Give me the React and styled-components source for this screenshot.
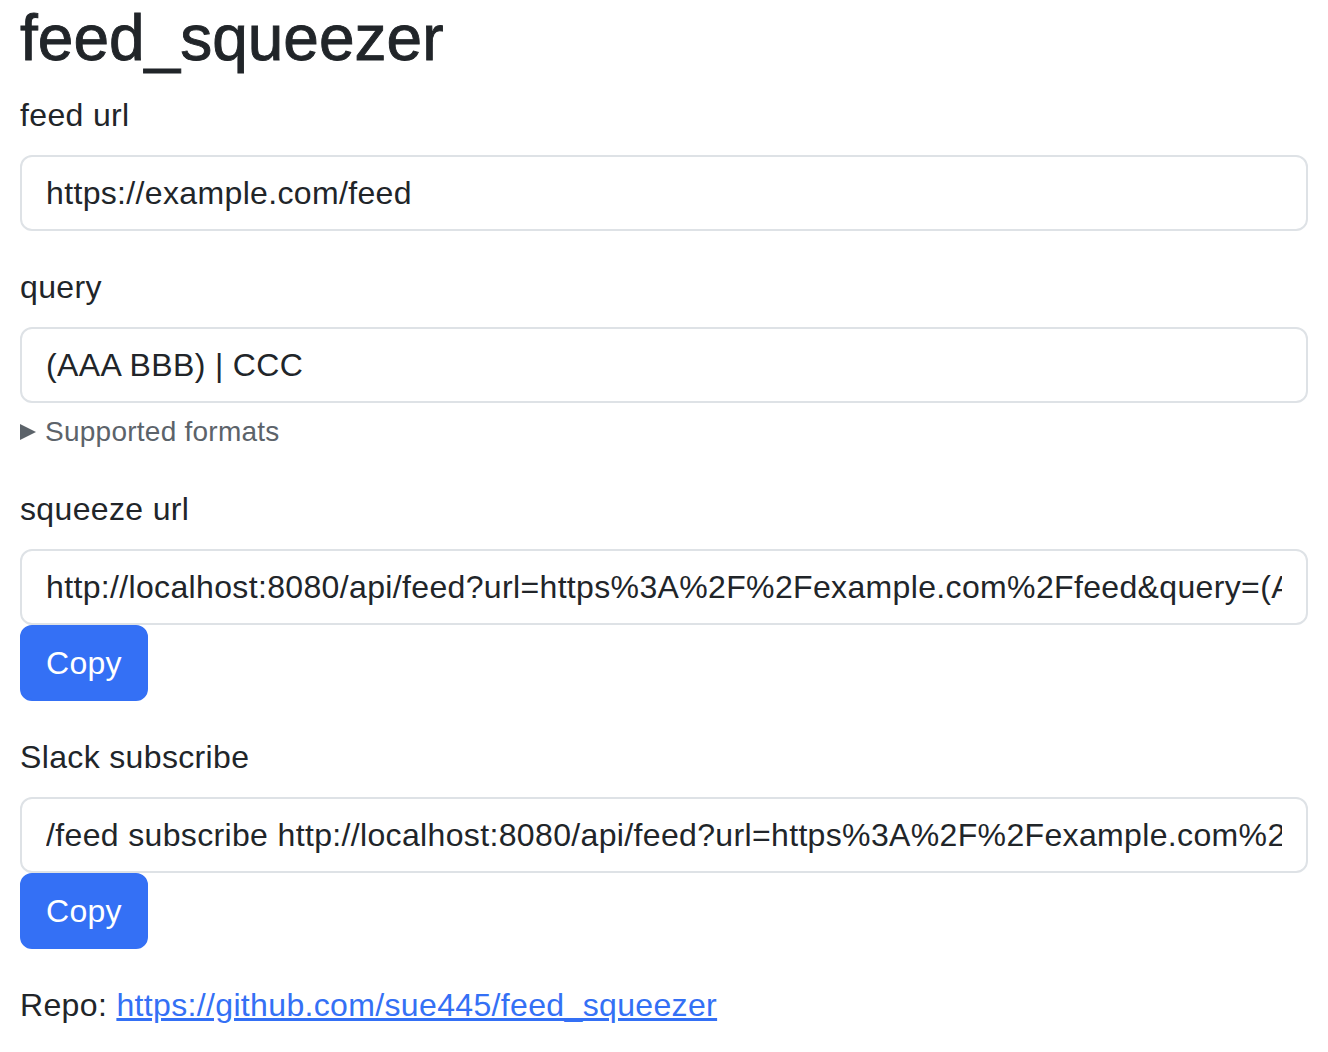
import React from "react";
import styled, { createGlobalStyle } from "styled-components";

const Global = createGlobalStyle`
  * {
    box-sizing: border-box;
  }
  body {
    margin: 0;
    background: #fff;
    color: #212529;
    font-family: "Liberation Sans", Arial, sans-serif;
    font-size: 32px;
    line-height: 1.5;
  }
`;

const Page = styled.div`
  padding: 0 20px;
`;

const Title = styled.h1`
  margin: 0 0 14px;
  font-size: 64px;
  font-weight: 400;
  line-height: 1.2;
  color: #212529;
  -webkit-text-stroke: 0.9px #212529;
`;

const Group = styled.div`
  margin-bottom: 32px;
`;

const Label = styled.label`
  display: block;
  margin-bottom: 16px;
  letter-spacing: 0.35px;
`;

const Input = styled.input`
  display: block;
  width: 100%;
  padding: 12px 24px;
  font-family: inherit;
  font-size: 32px;
  line-height: 1.5;
  letter-spacing: 0.35px;
  color: #212529;
  background: #fff;
  border: 2px solid #dee2e6;
  border-radius: 12px;
  outline: none;
`;

const Help = styled.details`
  margin-top: 8px;
  font-size: 28px;
  line-height: 1.5;
  color: #5c636a;
  letter-spacing: 0.25px;
`;

const Summary = styled.summary`
  display: flex;
  align-items: center;
  list-style: none;
  cursor: pointer;

  &::-webkit-details-marker {
    display: none;
  }

  &::before {
    content: "";
    width: 0;
    height: 0;
    margin-right: 9px;
    border-left: 16px solid #5c636a;
    border-top: 8px solid transparent;
    border-bottom: 8px solid transparent;
  }
`;

const CopyButton = styled.button`
  display: inline-block;
  padding: 12px 24px;
  font-family: inherit;
  font-size: 32px;
  line-height: 1.5;
  letter-spacing: 0.3px;
  color: #fff;
  background: #3470f5;
  border: 2px solid #3470f5;
  border-radius: 12px;
  cursor: pointer;
`;

const Repo = styled.p`
  margin: 0;
  letter-spacing: 0.35px;

  a {
    color: #3470f5;
    text-decoration: underline;
  }
`;

const feedUrl = "https://example.com/feed";
const query = "(AAA BBB) | CCC";
const squeezeUrl =
  "http://localhost:8080/api/feed?url=" +
  encodeURIComponent(feedUrl) +
  "&query=" +
  encodeURIComponent(query);

export default function App() {
  return (
    <Page>
      <Global />
      <Title>feed_squeezer</Title>
      <Group>
        <Label htmlFor="feed">feed url</Label>
        <Input id="feed" defaultValue={feedUrl} />
      </Group>
      <Group>
        <Label htmlFor="query">query</Label>
        <Input id="query" defaultValue={query} />
        <Help>
          <Summary>Supported formats</Summary>
        </Help>
      </Group>
      <Group>
        <Label htmlFor="squeeze">squeeze url</Label>
        <Input id="squeeze" readOnly value={squeezeUrl} />
        <CopyButton>Copy</CopyButton>
      </Group>
      <Group>
        <Label htmlFor="slack">Slack subscribe</Label>
        <Input id="slack" readOnly value={"/feed subscribe " + squeezeUrl} />
        <CopyButton>Copy</CopyButton>
      </Group>
      <Repo>
        Repo:{" "}
        <a href="https://github.com/sue445/feed_squeezer">
          https://github.com/sue445/feed_squeezer
        </a>
      </Repo>
    </Page>
  );
}
